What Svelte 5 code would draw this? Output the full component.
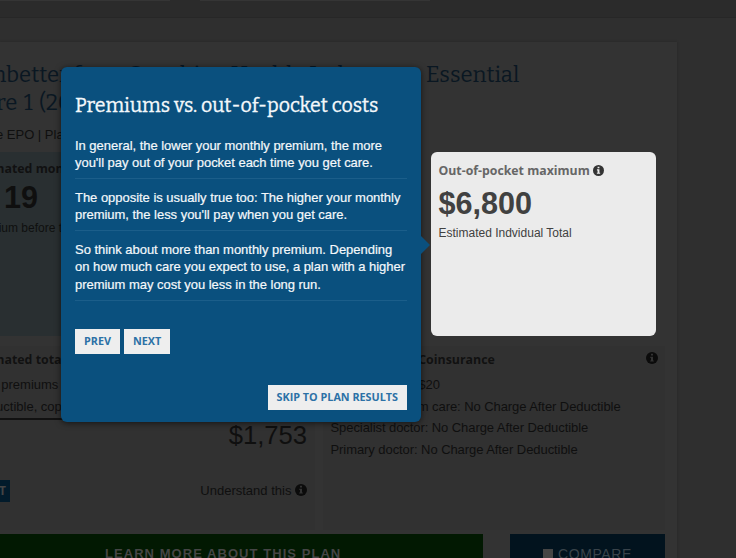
<script>
	const paragraphs = [
		['In general, the lower your monthly premium, the more', "you'll pay out of your pocket each time you get care."],
		["The opposite is usually true too: The higher your monthly", "premium, the less you'll pay when you get care."],
		['So think about more than monthly premium. Depending', 'on how much care you expect to use, a plan with a higher', 'premium may cost you less in the long run.'],
	]

	const copays = [
		'Generic drugs: $20',
		'Emergency room care: No Charge After Deductible',
		'Specialist doctor: No Charge After Deductible',
		'Primary doctor: No Charge After Deductible',
	]
</script>

{#snippet info()}
	<svg class="info" viewBox="0 0 12 12" aria-hidden="true">
		<circle cx="6" cy="6" r="6" fill="currentColor" />
		<path class="mark" d="M5 1.8h2v1.7H5zM4.3 4.7H7v3.7h.8v1.2H4.2V8.4H5V5.9h-.7z" />
	</svg>
{/snippet}

<div class="page">
	<header>
		<div class="tab first"></div>
		<div class="tab"></div>
	</header>

	<main>
		<h2>
			<span class="line one">Ambetter from Sunshine Health: Ind</span>
			<span class="line">Essential</span>
			<span class="line two">Care 1 (2017)</span>
		</h2>
		<p class="kind"><span>Bronze EPO | Plan ID</span></p>

		<div class="row costs">
			<section class="premium">
				<h3>Estimated monthly</h3>
				<strong>19</strong>
				<p>Premium before tax</p>
			</section>
			<section class="maximum">
				<h3>Out-of-pocket maximum {@render info()}</h3>
				<strong>$6,800</strong>
				<p>Estimated Indvidual Total</p>
			</section>
		</div>

		<div class="row details">
			<section class="total">
				<h3>Estimated total</h3>
				<p class="l1">Yearly premiums</p>
				<p class="l2">+ Deductible, copay</p>
				<div class="sum">$1,753</div>
				<div class="foot">
					<span class="edit">EDIT</span>
					<span>Understand this {@render info()}</span>
				</div>
			</section>
			<section class="copay">
				<h3><span>Copayments / Coinsurance</span> {@render info()}</h3>
				<ul>
					{#each copays as item}
						<li>{item}</li>
					{/each}
				</ul>
			</section>
		</div>

		<div class="row actions">
			<div class="learn">LEARN MORE ABOUT THIS PLAN</div>
			<div class="compare"><i></i>COMPARE</div>
		</div>
	</main>

	<div class="popover">
		<h1>Premiums vs. out-of-pocket costs</h1>
		{#each paragraphs as lines}
			<p>
				{#each lines as line}
					<span>{line}</span>
				{/each}
			</p>
		{/each}
		<nav>
			<button>PREV</button>
			<button>NEXT</button>
		</nav>
		<button class="skip">SKIP TO PLAN RESULTS</button>
	</div>
</div>

<style>
	:global(body) {
		margin: 0;
		background: #2f2f2f;
	}

	.page {
		position: relative;
		width: 736px;
		height: 558px;
		overflow: hidden;
		background: #2f2f2f;
		color: #0f0f0f;
		font-family: "Liberation Sans", Arial, sans-serif;
		font-size: 13px;
	}

	.page * {
		box-sizing: border-box;
	}

	h1, h2, h3, p, ul {
		margin: 0;
		padding: 0;
	}

	header {
		display: flex;
		gap: 30px;
		height: 18px;
		background: #2b2b2b;
		border-bottom: 1px solid #272727;
	}

	.tab {
		width: 230px;
		height: 1px;
		background: #353535;
	}

	.tab.first {
		width: 170px;
	}

	main {
		width: 677px;
		height: 530px;
		margin-top: 24px;
		padding-top: 18px;
		background: #333;
		box-shadow: 0 0 2px #262626;
	}

	h1, h2 {
		font-family: "Bitter", "DejaVu Serif Condensed", "DejaVu Serif", serif;
		font-weight: 400;
	}

	h2 {
		display: grid;
		grid-template-columns: 426px auto;
		align-content: start;
		height: 64px;
		padding-top: 1px;
		color: #0a1722;
		font-size: 22.1px;
		line-height: 28px;
	}

	.line {
		white-space: nowrap;
	}

	.one {
		margin-left: -30px;
	}

	.two {
		margin-left: -30px;
		word-spacing: 2px;
	}

	.kind {
		height: 28px;
		margin-left: -38px;
		line-height: 21px;
		white-space: nowrap;
	}

	.row {
		display: flex;
	}

	.costs {
		height: 184px;
	}

	section {
		white-space: nowrap;
	}

	h3 {
		color: #111;
		font-family: "Open Sans", sans-serif;
		font-size: 12.4px;
		font-weight: 700;
		line-height: 18px;
	}

	.costs strong {
		display: block;
		font-size: 30.6px;
		line-height: 36px;
	}

	.costs p {
		font-size: 12px;
		line-height: 17px;
	}

	.premium {
		width: 420px;
		margin-right: 11px;
		padding-top: 8px;
		background: #292f31;
	}

	.premium h3 {
		margin-left: -30px;
	}

	.premium strong {
		margin-top: 1px;
		padding-left: 4px;
	}

	.premium p {
		margin: 5px 0 0 -30px;
	}

	.maximum {
		width: 225px;
		padding: 10px 0 0 7.5px;
		border-radius: 6px;
		background: #ebebeb;
		color: #414141;
		--mark: #ebebeb;
	}

	.maximum h3 {
		color: #666;
		font-size: 12.3px;
	}

	.maximum strong {
		margin-top: 5px;
	}

	.maximum p {
		margin-top: 4px;
	}

	.info {
		width: 11px;
		height: 11px;
		color: #333;
		vertical-align: -1px;
	}

	.mark {
		fill: var(--mark, #333);
	}

	.details {
		height: 198px;
		padding-top: 10px;
		line-height: 22px;
	}

	.total {
		width: 315px;
		height: 184px;
		background: #313131;
	}

	.total h3, .copay h3 {
		height: 28px;
		line-height: 28px;
	}

	.total h3 {
		margin-left: -30px;
	}

	.l1 {
		margin-left: -38px;
	}

	.l2 {
		height: 24px;
		padding-bottom: 2px;
		border-bottom: 2px solid #111;
		text-indent: -39px;
	}

	.sum {
		padding-right: 8px;
		text-align: right;
		font-size: 25.6px;
		line-height: 30px;
	}

	.foot {
		display: flex;
		justify-content: space-between;
		margin-top: 30px;
		padding-right: 8px;
	}

	.edit {
		display: flex;
		justify-content: flex-end;
		width: 10px;
		height: 22px;
		padding-right: 4px;
		background: #021b2b;
		color: #444;
		font: 700 12px/22px "Open Sans", sans-serif;
	}

	.total .info, .copay .info {
		width: 12px;
		height: 12px;
		color: #0b0b0b;
	}

	.copay {
		width: 342px;
		height: 184px;
		margin-left: 8px;
		padding: 0 7px 0 7.5px;
		background: #313131;
		letter-spacing: -.07px;
	}

	.copay h3 {
		display: flex;
		justify-content: space-between;
		align-items: center;
		letter-spacing: 0;
	}

	.copay h3 span {
		margin-left: -1px;
	}

	.copay .info {
		margin-bottom: 4px;
	}

	ul {
		list-style: none;
	}

	li {
		height: 21.5px;
	}

	.actions {
		justify-content: space-between;
		height: 40px;
		padding-right: 12px;
		color: #454545;
		font-size: 13px;
		line-height: 39px;
	}

	.learn {
		width: 483px;
		background: #021902;
		padding-left: 105px;
		font-weight: 700;
		letter-spacing: 1.05px;
	}

	.compare {
		display: flex;
		align-items: center;
		width: 155px;
		padding-left: 33px;
		background: #02131e;
		color: #39434a;
		font-size: 14px;
		letter-spacing: .6px;
	}

	.compare i {
		width: 10px;
		height: 10px;
		margin-right: 5px;
		background: #454545;
	}

	/* tour step, floats over the plan card */
	.popover {
		position: absolute;
		top: 67px;
		left: 61px;
		width: 360px;
		height: 355px;
		padding: 25px 14px 0;
		border-radius: 6px;
		background: #0a507e;
		box-shadow: 0 1px 6px #0009;
		color: #f4f8fb;
	}

	.popover::after {
		content: "";
		position: absolute;
		top: 169px;
		left: 360px;
		border: 9px solid transparent;
		border-left-color: #0a507e;
		border-right: 0;
	}

	h1 {
		height: 45px;
		font-size: 19.6px;
		line-height: 28px;
		white-space: nowrap;
		-webkit-text-stroke: .3px;
	}

	.popover p {
		margin-bottom: 10px;
		padding-bottom: 7px;
		border-bottom: 1px solid #1b5e8a;
		letter-spacing: -.03px;
		line-height: 17.1px;
		-webkit-text-stroke: .2px;
	}

	.popover p span {
		display: block;
		white-space: nowrap;
	}

	nav {
		display: flex;
		gap: 4px;
		margin-top: 28px;
	}

	button {
		display: block;
		height: 25px;
		padding: 0 9px 1px;
		border: 0;
		background: #eee;
		color: #2c71a6;
		font: 700 10.8px/24px "Open Sans", sans-serif;
		white-space: nowrap;
	}

	.skip {
		margin: 31px 0 0 auto;
	}
</style>
